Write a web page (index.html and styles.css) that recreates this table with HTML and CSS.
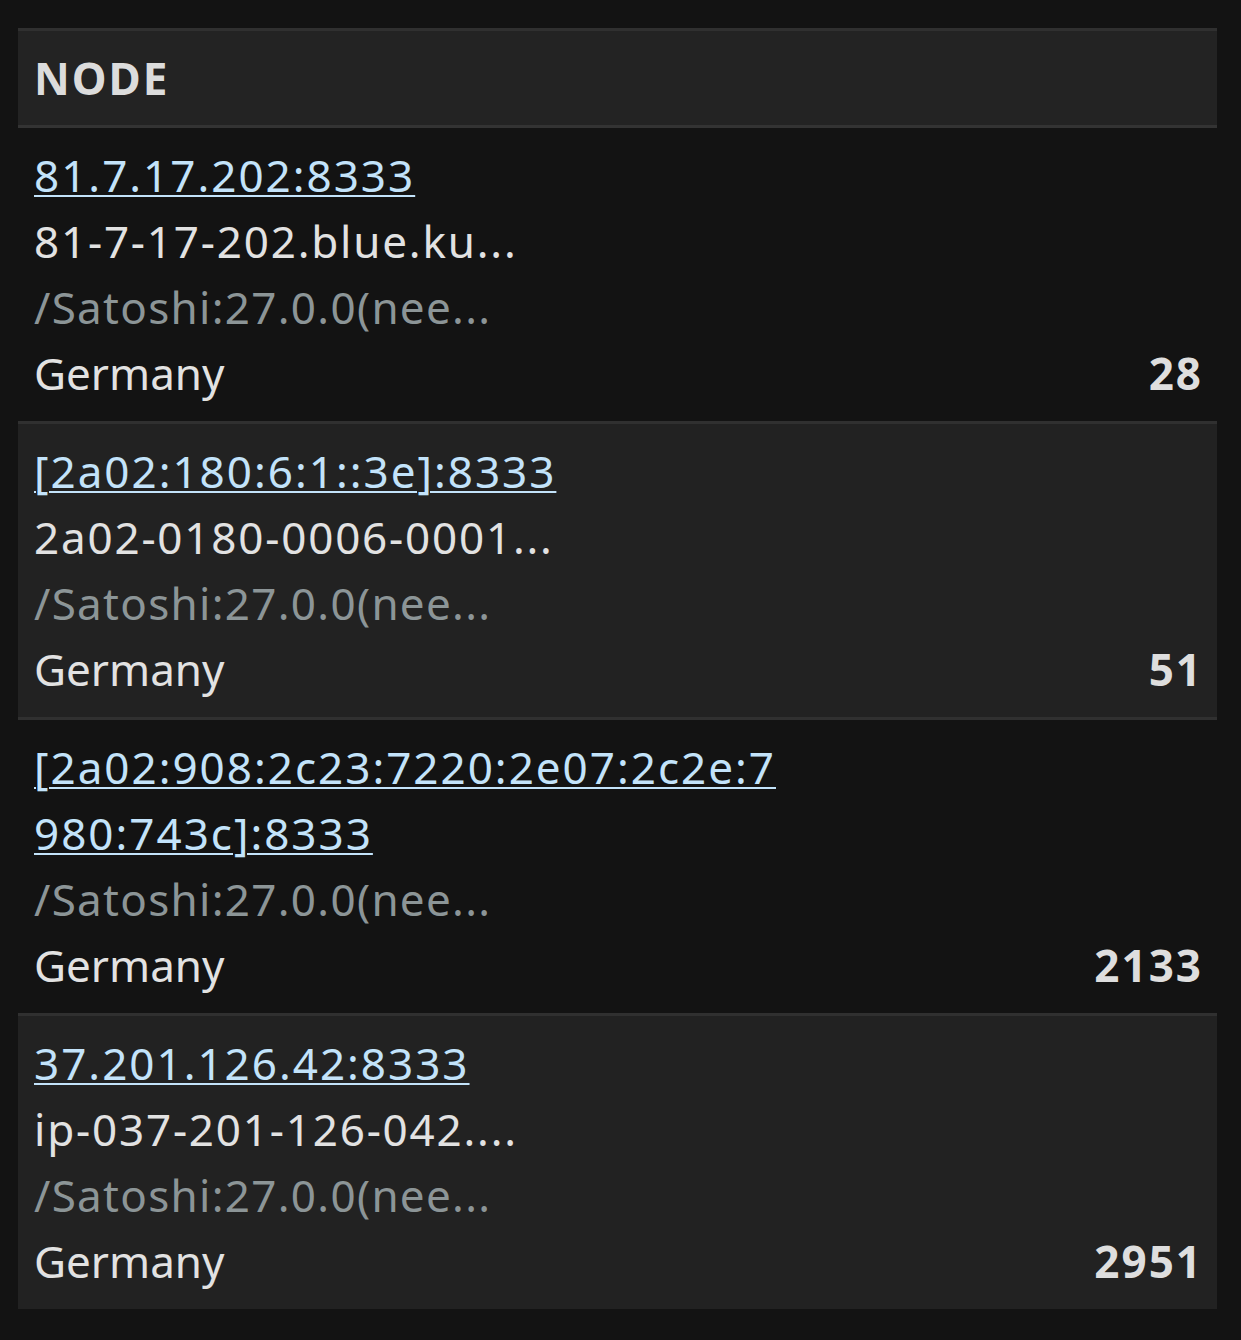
FILE: index.html
```html
<!DOCTYPE html>
<html lang="en">
<head>
    <meta charset="UTF-8">
    <title>Nodes</title>
    <link rel="stylesheet" href="styles.css">
</head>
<body>

<div class="node-table">
    <div class="node-head">NODE</div>

    <div class="node-row">
        <a class="node-addr" href="#">81.7.17.202:8333</a>
        <div class="node-host">81-7-17-202.blue.ku...</div>
        <div class="node-agent">/Satoshi:27.0.0(nee...</div>
        <div class="node-foot">
            <span class="node-country">Germany</span>
            <span class="node-count">28</span>
        </div>
    </div>

    <div class="node-row alt">
        <a class="node-addr" href="#">[2a02:180:6:1::3e]:8333</a>
        <div class="node-host">2a02-0180-0006-0001...</div>
        <div class="node-agent">/Satoshi:27.0.0(nee...</div>
        <div class="node-foot">
            <span class="node-country">Germany</span>
            <span class="node-count">51</span>
        </div>
    </div>

    <div class="node-row">
        <a class="node-addr" href="#">[2a02:908:2c23:7220:2e07:2c2e:7<br>980:743c]:8333</a>
        <div class="node-agent">/Satoshi:27.0.0(nee...</div>
        <div class="node-foot">
            <span class="node-country">Germany</span>
            <span class="node-count">2133</span>
        </div>
    </div>

    <div class="node-row alt">
        <a class="node-addr" href="#">37.201.126.42:8333</a>
        <div class="node-host">ip-037-201-126-042....</div>
        <div class="node-agent">/Satoshi:27.0.0(nee...</div>
        <div class="node-foot">
            <span class="node-country">Germany</span>
            <span class="node-count">2951</span>
        </div>
    </div>
</div>

</body>
</html>
```

FILE: styles.css
```css
* {
    margin: 0;
    padding: 0;
    box-sizing: border-box;
}

body {
    font-family: 'Noto Sans', 'DejaVu Sans', sans-serif;
    background: #131313;
    color: #e2e2e2;
    padding: 28px 24px 30px 18px;
}

.node-table {
    width: 1199px;
}

.node-head {
    background: #232323;
    border-top: 3px solid #303030;
    border-bottom: 3px solid #333;
    height: 100px;
    padding: 0 16px;
    display: flex;
    align-items: center;
    font-size: 44px;
    font-weight: bold;
    letter-spacing: 2px;
    color: #dcdcdc;
}

.node-row {
    padding: 14px 16px 15px 16px;
    font-size: 44px;
    line-height: 66px;
    border-top: 3px solid #303030;
}

.node-head + .node-row {
    border-top: none;
}

.node-row.alt {
    background: #222;
}

.node-addr {
    display: block;
    color: #c3e3fa;
    letter-spacing: 2px;
    text-decoration: underline;
    text-decoration-thickness: 2px;
    text-underline-offset: 3px;
}

.node-host {
    color: #e2e2e2;
    letter-spacing: 1.8px;
}

.node-agent {
    color: #8c9597;
    letter-spacing: 1.3px;
}

.node-foot {
    display: flex;
    justify-content: space-between;
}

.node-count {
    font-weight: bold;
    letter-spacing: 2px;
    margin-right: -2px;
    color: #dedede;
}
```
